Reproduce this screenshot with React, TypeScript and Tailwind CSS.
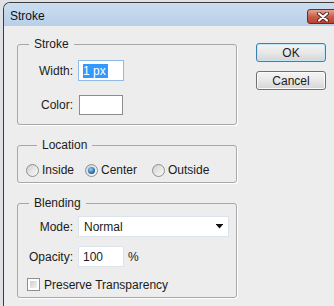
import { ReactNode } from "react";

type RadioProps = {
  label: string;
  checked?: boolean;
  width: string;
};

const Radio = ({ label, checked, width }: RadioProps) => {
  return (
    <div className={`flex items-center gap-[3px] ${width}`}>
      <span className="flex h-[13px] w-[13px] items-center justify-center rounded-full border border-[#8e8f8f] bg-[linear-gradient(135deg,#d0d0d0,#fbfbfb)]">
        {checked && (
          <span className="h-[7px] w-[7px] rounded-full bg-[radial-gradient(circle_at_40%_35%,#8fd0fa,#1d5f9c_70%)]" />
        )}
      </span>
      <span>{label}</span>
    </div>
  );
};

type GroupProps = {
  title: string;
  className?: string;
  children: ReactNode;
};

const Group = ({ title, className, children }: GroupProps) => {
  return (
    <fieldset
      className={`rounded-[3px] border border-[#a7a7a7] shadow-[1px_1px_0_#ffffff] ${className ?? ""}`}
    >
      <legend className="ml-[11px] px-[5px] leading-[14px]">{title}</legend>
      {children}
    </fieldset>
  );
};

const Label = ({ children }: { children: ReactNode }) => (
  <span className="w-[55px] text-right">{children}</span>
);

const Button = ({ children, primary }: { children: ReactNode; primary?: boolean }) => (
  <div
    className={`flex h-[19px] w-[70px] items-center justify-center rounded-[3px] border bg-linear-to-b from-[#f4f4f4] via-[#e8e8e8] to-[#d6d6d6] ${
      primary
        ? "border-[#3c7fb1] shadow-[inset_0_0_0_1px_#c4e6fa]"
        : "border-[#707070] shadow-[inset_0_0_0_1px_#fafafa]"
    }`}
  >
    {children}
  </div>
);

export default function App() {
  return (
    <div className="h-[306px] w-[334px] overflow-hidden bg-[#dfe1e4] pl-[3px] pt-[2px] font-['Liberation_Sans',Arial,sans-serif] text-[12px] leading-[14px] text-[#1b1b1b]">
      <div className="flex h-[330px] w-[345px] flex-col overflow-hidden rounded-tl-[7px] border-l border-t border-[#3d3d3d] bg-[#ededed]">
        {/* title bar */}
        <div className="flex h-[23px] shrink-0 items-start bg-linear-to-b from-[#cbddf1] to-[#b8cfe9]">
          <span className="pl-[6px] pt-[6px] text-[#111]">Stroke</span>
          <div className="ml-auto mr-[7px] mt-[6px] flex h-[15px] w-[34px] items-center rounded-[3px] border border-[#6e2a22] bg-linear-to-b from-[#e3a493] via-[#c9604a] to-[#b9402c] pl-[9px]">
            <svg width="12" height="10" viewBox="0 0 12 10">
              <path d="M2 1.5 L10 8.5 M10 1.5 L2 8.5" stroke="#5a2019" strokeWidth="4" strokeLinecap="round" />
              <path d="M2 1.5 L10 8.5 M10 1.5 L2 8.5" stroke="#ffffff" strokeWidth="2.2" strokeLinecap="round" />
            </svg>
          </div>
        </div>

        {/* body */}
        <div className="flex pl-[13px] pt-[11px]">
          <div className="flex w-[220px] flex-col gap-[13px]">
            <Group title="Stroke" className="pb-[9px] pt-[9px]">
              <div className="flex h-[21px] items-center gap-[5px]">
                <Label>Width:</Label>
                <div className="flex h-[21px] w-[46px] items-center border border-[#8fbbe8] bg-white pl-[4px]">
                  <span className="bg-[#3399ff] pr-[2px] text-white">1 px</span>
                </div>
              </div>
              <div className="mt-[13px] flex h-[21px] items-center gap-[6px]">
                <Label>Color:</Label>
                <div className="h-[20px] w-[44px] border border-[#8d8d8d] bg-white" />
              </div>
            </Group>

            <Group title="Location" className="pb-[5px] pl-[8px] pt-[11px]">
              <div className="flex h-[14px] items-center">
                <Radio label="Inside" width="w-[59px]" />
                <Radio label="Center" checked width="w-[67px]" />
                <Radio label="Outside" width="w-[70px]" />
              </div>
            </Group>

            <Group title="Blending" className="pb-[6px] pt-[6px]">
              <div className="flex h-[21px] items-center gap-[5px]">
                <Label>Mode:</Label>
                <div className="flex h-[21px] w-[151px] items-center justify-between border border-[#dde3ea] bg-white pl-[5px] pr-[5px]">
                  <span>Normal</span>
                  <svg width="7" height="5" viewBox="0 0 7 5">
                    <path d="M0 0 H7 V1 H0 Z M0.5 1 H6.5 L3.5 4.5 Z" fill="#111" />
                  </svg>
                </div>
              </div>
              <div className="mt-[9px] flex h-[21px] items-center gap-[5px]">
                <Label>Opacity:</Label>
                <div className="flex h-[21px] w-[46px] items-center border border-[#dde3ea] bg-white pl-[4px]">
                  100
                </div>
                <span className="ml-[-1px]">%</span>
              </div>
              <div className="mt-[11px] flex h-[13px] items-center gap-[4px] pl-[9px]">
                <span className="h-[13px] w-[13px] border border-[#8e8f8f] bg-white p-[2px]">
                  <span className="block h-full w-full bg-linear-to-br from-[#cfcfcf] to-[#f4f4f4]" />
                </span>
                <span>Preserve Transparency</span>
              </div>
            </Group>
          </div>

          <div className="ml-[19px] flex flex-col gap-[9px] pt-[6px]">
            <Button primary>OK</Button>
            <Button>Cancel</Button>
          </div>
        </div>
      </div>
    </div>
  );
}
